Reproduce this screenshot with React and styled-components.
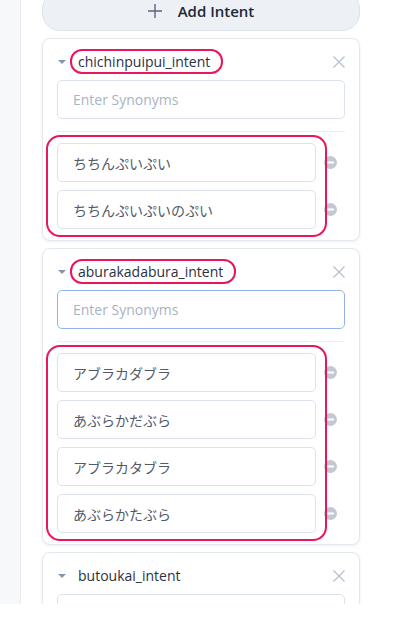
import React from 'react';
import styled, {createGlobalStyle} from 'styled-components';

const GlobalStyle = createGlobalStyle`
    html, body {
        margin: 0;
        padding: 0;
        background: #ffffff;
    }
    body {
        font-family: "Open Sans", "Noto Sans CJK JP", sans-serif;
        color: #2a3142;
    }
`;

const intents = [
    {
        name: 'chichinpuipui_intent',
        synonyms: ['ちちんぷいぷい', 'ちちんぷいぷいのぷい'],
        marked: true,
    },
    {
        name: 'aburakadabura_intent',
        synonyms: ['アブラカダブラ', 'あぶらかだぶら', 'アブラカタブラ', 'あぶらかたぶら'],
        marked: true,
        focused: true,
    },
    {
        name: 'butoukai_intent',
        synonyms: [],
    },
];

const CloseIcon = () => (
    <svg width="12" height="12" viewBox="0 0 12 12">
        <path d="M0.5 0.5 L11.5 11.5 M11.5 0.5 L0.5 11.5" stroke="#b5c2d0" strokeWidth="1.3" fill="none"/>
    </svg>
);

const MinusIcon = () => (
    <svg width="13" height="13" viewBox="0 0 13 13">
        <circle cx="6.5" cy="6.5" r="6.5" fill="#c3c9d2"/>
        <rect x="3" y="5.5" width="7" height="2" fill="#ffffff"/>
    </svg>
);

const PlusIcon = () => (
    <svg width="14" height="14" viewBox="0 0 14 14">
        <path d="M7 0 V14 M0 7 H14" stroke="#5b6678" strokeWidth="1.4" fill="none"/>
    </svg>
);

const IntentCard = ({intent}) => {
    return (
        <Card>
            <Header>
                <Caret/>
                <Label marked={intent.marked}>{intent.name}</Label>
                <CloseButton><CloseIcon/></CloseButton>
            </Header>
            <Field focused={intent.focused} placeholder="Enter Synonyms"/>
            {intent.synonyms.length > 0 && (
                <>
                    <Divider/>
                    <SynonymList marked={intent.marked}>
                        {intent.synonyms.map((s) => (
                            <SynonymRow key={s}>
                                <Field as="div">{s}</Field>
                                <RemoveButton><MinusIcon/></RemoveButton>
                            </SynonymRow>
                        ))}
                    </SynonymList>
                </>
            )}
        </Card>
    );
};

const App = () => {
    return (
        <>
            <GlobalStyle/>
            <Page>
                <Sidebar/>
                <Main>
                    <AddButton>
                        <PlusIcon/>
                        <span>Add Intent</span>
                    </AddButton>
                    {intents.map((intent) => (
                        <IntentCard key={intent.name} intent={intent}/>
                    ))}
                </Main>
            </Page>
        </>
    );
};

const Page = styled.div`
    display: flex;
    width: 400px;
    height: 604px;
    overflow: hidden;
    background: #ffffff;
`;

const Sidebar = styled.div`
    width: 20px;
    flex-shrink: 0;
    background: #f7f8f9;
    border-right: 1px solid #e8ebef;
`;

const Main = styled.div`
    flex: 1;
    display: flex;
    flex-direction: column;
    gap: 7px;
    margin-top: -9px;
    padding: 0 40px 0 21px;
`;

const AddButton = styled.div`
    height: 40px;
    box-sizing: border-box;
    display: flex;
    align-items: center;
    justify-content: center;
    gap: 16px;
    background: #edf1f5;
    border: 1px solid #dbe2ea;
    border-radius: 18px;
    font-size: 15px;
    font-weight: 600;
    color: #1e2838;
    flex-shrink: 0;
`;

const Card = styled.div`
    background: #ffffff;
    border: 1px solid #e4e8ee;
    border-radius: 8px;
    box-shadow: 0 1px 3px rgba(30, 45, 70, 0.08);
    padding: 12px 14px 11px;
    flex-shrink: 0;
`;

const Header = styled.div`
    display: flex;
    align-items: center;
    height: 22px;
    margin-bottom: 7px;
`;

const Caret = styled.span`
    width: 0;
    height: 0;
    margin-left: 1px;
    margin-right: 12px;
    border-left: 4px solid transparent;
    border-right: 4px solid transparent;
    border-top: 4px solid #8497ad;
`;

const Label = styled.span`
    position: relative;
    font-size: 14px;
    line-height: 22px;
    color: #2a3142;
    &::after {
        content: '';
        display: ${(p) => (p.marked ? 'block' : 'none')};
        position: absolute;
        top: -2px;
        bottom: -1px;
        left: -8px;
        right: -13px;
        border: 2px solid #e8175d;
        border-radius: 12px;
    }
`;

const CloseButton = styled.span`
    margin-left: auto;
    display: flex;
    margin-top: -1px;
`;

const Field = styled.input`
    display: flex;
    align-items: center;
    width: 100%;
    height: 39px;
    box-sizing: border-box;
    padding: 0 15px;
    border: 1px solid ${(p) => (p.focused ? '#93b3ee' : '#dde3ea')};
    border-radius: 5px;
    background: #ffffff;
    font-family: "Open Sans", "Noto Sans CJK JP", sans-serif;
    font-size: 14px;
    color: #525a68;
    outline: none;
    &::placeholder {
        color: #a9b3c1;
    }
`;

const Divider = styled.div`
    height: 1px;
    background: #edf0f3;
    margin: 12px 0 11px;
`;

const SynonymList = styled.div`
    position: relative;
    display: flex;
    flex-direction: column;
    gap: 8px;
    &::after {
        content: '';
        display: ${(p) => (p.marked ? 'block' : 'none')};
        position: absolute;
        top: -8px;
        bottom: -8px;
        left: -11px;
        right: 18px;
        border: 2px solid #e8175d;
        border-radius: 14px;
        pointer-events: none;
    }
`;

const SynonymRow = styled.div`
    display: flex;
    align-items: center;
    gap: 8px;
    padding-right: 8px;
`;

const RemoveButton = styled.span`
    display: flex;
    flex-shrink: 0;
`;

export default App;
